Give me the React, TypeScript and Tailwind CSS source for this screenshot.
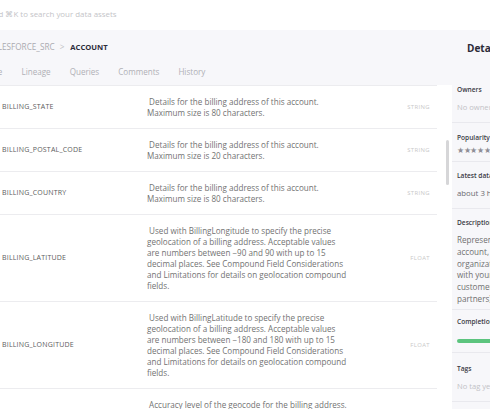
import React from "react";

const rows: { name: string; lines: string[]; type: string }[] = [
  {
    name: "BILLING_STATE",
    lines: ["Details for the billing address of this account.", "Maximum size is 80 characters."],
    type: "STRING",
  },
  {
    name: "BILLING_POSTAL_CODE",
    lines: ["Details for the billing address of this account.", "Maximum size is 20 characters."],
    type: "STRING",
  },
  {
    name: "BILLING_COUNTRY",
    lines: ["Details for the billing address of this account.", "Maximum size is 80 characters."],
    type: "STRING",
  },
  {
    name: "BILLING_LATITUDE",
    lines: [
      "Used with BillingLongitude to specify the precise",
      "geolocation of a billing address. Acceptable values",
      "are numbers between \u221290 and 90 with up to 15",
      "decimal places. See Compound Field Considerations",
      "and Limitations for details on geolocation compound",
      "fields.",
    ],
    type: "FLOAT",
  },
  {
    name: "BILLING_LONGITUDE",
    lines: [
      "Used with BillingLatitude to specify the precise",
      "geolocation of a billing address. Acceptable values",
      "are numbers between \u2212180 and 180 with up to 15",
      "decimal places. See Compound Field Considerations",
      "and Limitations for details on geolocation compound",
      "fields.",
    ],
    type: "FLOAT",
  },
  {
    name: "BILLING_GEOCODE_ACCURACY",
    lines: [
      "Accuracy level of the geocode for the billing address.",
      "See Compound Field Considerations and Limitations for",
      "details on geolocation compound fields, including",
      "the accuracy values that can be returned.",
    ],
    type: "STRING",
  },
];

function Row({ name, lines, type }: { name: string; lines: string[]; type: string }) {
  return (
    <div className="flex items-center border-b border-[#ececef] py-[10px]">
      <div className="w-[147px] shrink-0 pl-[2px] text-[7px] tracking-[0.2px] text-[#5c5c5c] whitespace-nowrap">
        {name}
      </div>
      <div className="w-[250px] shrink-0 text-[8.1px] leading-[11px] text-[#727272]">
        {lines.map((l, i) => (
          <div key={i} className="whitespace-nowrap">
            {i === 0 ? "\u00a0" + l : l}
          </div>
        ))}
      </div>
      <div className="flex-1 text-right pr-[7px] text-[5.9px] tracking-[0.4px] text-[#c8c8c8]">{type}</div>
    </div>
  );
}

function Section({
  label,
  children,
  className = "pt-[9px] pb-[9px]",
}: {
  label: string;
  children: React.ReactNode;
  className?: string;
}) {
  return (
    <div className={`border-b border-[#e9e9ee] pl-[5px] ${className}`}>
      <div className="h-[10px] leading-[10px] text-[6.6px] font-semibold text-[#3a3a44] whitespace-nowrap">{label}</div>
      {children}
    </div>
  );
}

export default function App() {
  return (
    <div className="w-[490px] h-[409px] overflow-hidden bg-[#f7f7fa] font-['Open_Sans',sans-serif]">
      <div className="h-[30px] bg-white flex items-center overflow-hidden">
        <div className="-ml-[14px] text-[7.9px] text-[#c4c4c8] whitespace-nowrap">
          Hold ⌘K to search your data assets
        </div>
      </div>
      <div className="flex h-[379px]">
        <div className="w-[452px] shrink-0 flex flex-col">
          <div className="h-[35px] flex items-center overflow-hidden">
            <div className="-ml-[12px] flex items-center whitespace-nowrap text-[8.2px]">
              <span className="text-[#ababb1]">SALESFORCE_SRC</span>
              <span className="ml-[5px] mr-[6px] text-[#c0c0c4]">&gt;</span>
              <span className="font-bold text-[#2d2d3a] text-[7.6px]">ACCOUNT</span>
            </div>
          </div>
          <div className="h-[20px] pb-[5px] flex items-center overflow-hidden">
            <div className="-ml-[22px] flex items-center gap-[19px] whitespace-nowrap text-[8.1px] text-[#b0b0b6]">
              <span>Profile</span>
              <span>Lineage</span>
              <span>Queries</span>
              <span>Comments</span>
              <span>History</span>
            </div>
          </div>
          <div className="flex-1 bg-white flex overflow-hidden">
            <div className="w-[437px] shrink-0 border-t border-[#ececef]">
              {rows.map((r) => (
                <Row key={r.name} {...r} />
              ))}
            </div>
            <div className="flex-1">
              <div className="mt-[55px] ml-[9px] w-[3px] h-[45px] rounded-full bg-[#d6d6d8]" />
            </div>
          </div>
        </div>
        <div className="flex-1 overflow-hidden">
          <div className="h-[46px] pl-[15px] pt-[11px] text-[10px] font-bold text-[#2b2b38] whitespace-nowrap">
            Details
          </div>
          <div className="w-[160px]">
            <Section label="Owners">
              <div className="mt-[6px] h-[12px] leading-[12px] text-[7.6px] text-[#c2c2c6] whitespace-nowrap">
                No owner yet
              </div>
            </Section>
            <Section label="Popularity" className="pt-[10px] pb-[6px]">
              <div className="mt-[2px] h-[10px] leading-[10px] text-[8px] tracking-[-0.3px] text-[#8e8e96] whitespace-nowrap">
                ★★★★★
              </div>
            </Section>
            <Section label="Latest data update">
              <div className="mt-[6px] h-[12px] leading-[12px] text-[7.8px] text-[#6a6a70] whitespace-nowrap">
                about 3 hours ago
              </div>
            </Section>
            <Section label="Description" className="pt-[9px] pb-[4px]">
              <div className="mt-[6px] text-[8.1px] leading-[11.8px] text-[#707070] whitespace-nowrap">
                <div>Represents an individual</div>
                <div>account, which is an</div>
                <div>organization or person involved</div>
                <div>with your business (such as</div>
                <div>customers, competitors, and</div>
                <div>partners).</div>
              </div>
            </Section>
            <Section label="Completion" className="pt-[7px] pb-[9px]">
              <div className="mt-[12px] h-[4px] w-[120px] rounded-full bg-[#5cc47e]" />
            </Section>
            <Section label="Tags" className="pt-[11px] pb-[9px]">
              <div className="mt-[6px] h-[12px] leading-[12px] text-[7.6px] text-[#c2c2c6] whitespace-nowrap">
                No tag yet
              </div>
            </Section>
          </div>
        </div>
      </div>
    </div>
  );
}
